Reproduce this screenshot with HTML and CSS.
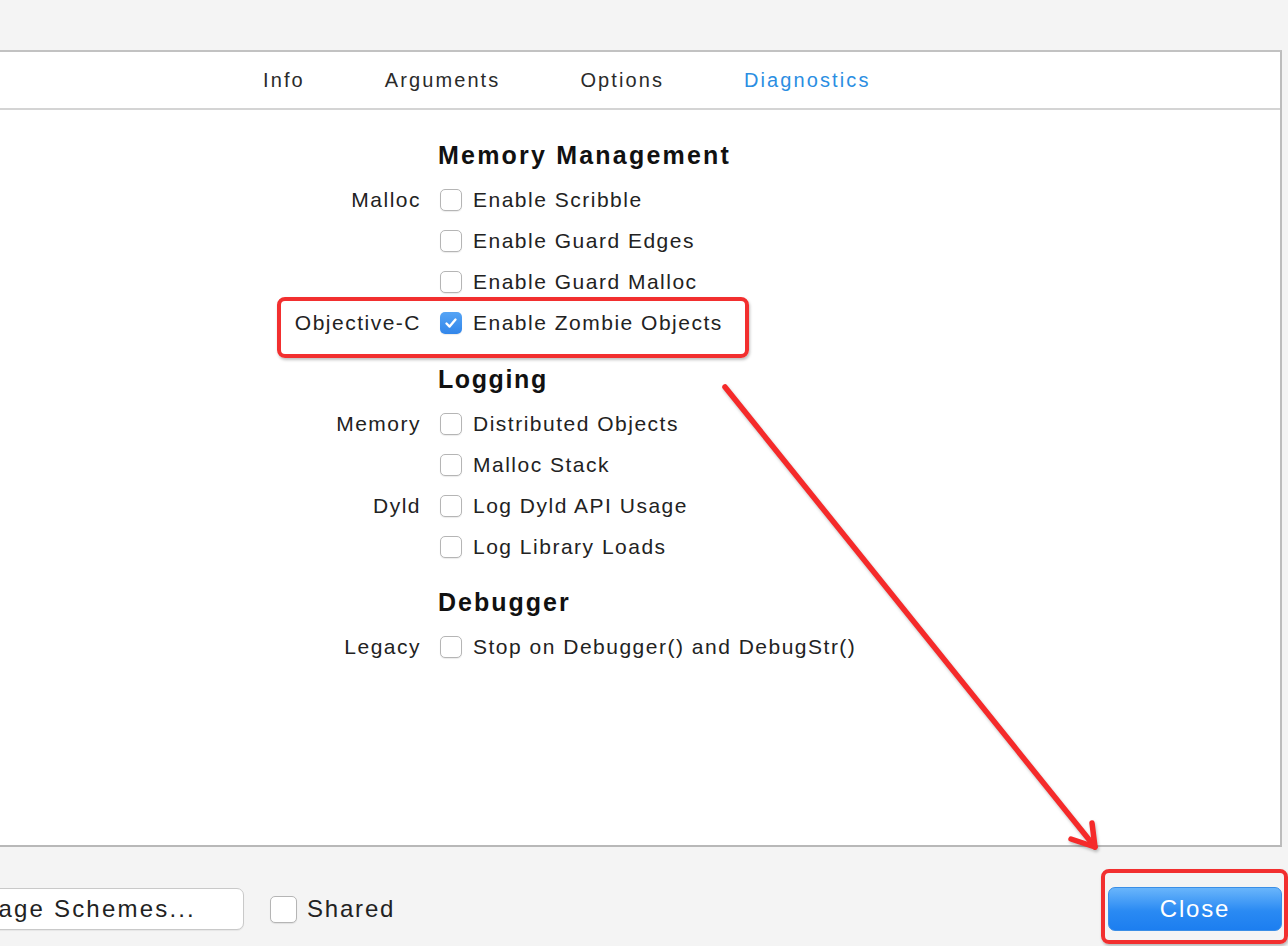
FILE: index.html
```html
<!DOCTYPE html>
<html>
<head>
<meta charset="utf-8">
<link rel="stylesheet" href="styles.css">
</head>
<body>
<div class="window">
  <div class="panel">
    <div class="tabs">
      <span class="tab">Info</span>
      <span class="tab">Arguments</span>
      <span class="tab">Options</span>
      <span class="tab active">Diagnostics</span>
    </div>
    <div class="form">
      <div class="row heading h-first"><span class="label"></span><span class="title">Memory Management</span></div>
      <div class="row"><span class="label">Malloc</span><span class="box"></span><span class="text">Enable Scribble</span></div>
      <div class="row"><span class="label"></span><span class="box"></span><span class="text">Enable Guard Edges</span></div>
      <div class="row"><span class="label"></span><span class="box"></span><span class="text">Enable Guard Malloc</span></div>
      <div class="row"><span class="label">Objective-C</span><span class="box checked"><svg viewBox="0 0 22 22" width="22" height="22"><path d="M6.5 11.5 L9.6 14.6 L15.5 7.6" fill="none" stroke="#fff" stroke-width="2.4" stroke-linecap="round" stroke-linejoin="round"/></svg></span><span class="text">Enable Zombie Objects</span></div>
      <div class="row heading h-logging"><span class="label"></span><span class="title">Logging</span></div>
      <div class="row"><span class="label">Memory</span><span class="box"></span><span class="text">Distributed Objects</span></div>
      <div class="row"><span class="label"></span><span class="box"></span><span class="text">Malloc Stack</span></div>
      <div class="row"><span class="label">Dyld</span><span class="box"></span><span class="text">Log Dyld API Usage</span></div>
      <div class="row"><span class="label"></span><span class="box"></span><span class="text">Log Library Loads</span></div>
      <div class="row heading h-debugger"><span class="label"></span><span class="title">Debugger</span></div>
      <div class="row"><span class="label">Legacy</span><span class="box"></span><span class="text">Stop on Debugger() and DebugStr()</span></div>
    </div>
  </div>
  <div class="footer">
    <div class="btn manage">Manage Schemes...</div>
    <div class="shared"><span class="box big"></span><span>Shared</span></div>
    <div class="btn close">Close</div>
  </div>
</div>

<div class="hl hl-zombie"></div>
<div class="hl hl-close"></div>
<svg class="arrow" width="1288" height="946" viewBox="0 0 1288 946">
  <g fill="none" stroke="#f52a2a" stroke-width="5.5" stroke-linecap="round" stroke-linejoin="round">
    <path d="M725 387 L1095 847"/>
    <path d="M1071 839 L1095 847 L1092 823"/>
  </g>
</svg>
</body>
</html>
```

FILE: styles.css
```css
html, body {
  margin: 0;
  padding: 0;
}
body {
  width: 1288px;
  height: 946px;
  overflow: hidden;
  background: #f4f4f4;
  font-family: "Liberation Sans", Arial, sans-serif;
  color: #222;
  position: relative;
}
.window {
  padding-top: 50px;
  height: 896px;
  display: flex;
  flex-direction: column;
}
.panel {
  background: #fff;
  border-top: 2px solid #c2c2c2;
  border-right: 2px solid #bdbdbd;
  border-bottom: 2px solid #b8b8b8;
  margin-right: 6px;
  height: 793px;
  box-sizing: content-box;
}
.tabs {
  height: 56px;
  border-bottom: 2px solid #d4d4d4;
  display: flex;
  align-items: center;
  padding-left: 263px;
  gap: 80px;
  font-size: 20px;
  letter-spacing: 2.1px;
  color: #2a2a2a;
}
.tab.active {
  color: #2b8ee2;
}
.form {
  padding-top: 25px;
  display: flex;
  flex-direction: column;
}
.row {
  display: flex;
  align-items: center;
  height: 41px;
  font-size: 21px;
  letter-spacing: 1.5px;
}
.label {
  width: 421px;
  text-align: right;
  flex: none;
  margin-right: 19px;
}
.box {
  flex: none;
  width: 20px;
  height: 20px;
  border: 1px solid #b5b5b5;
  border-radius: 5px;
  background: #fff;
  box-shadow: 0 1px 1px rgba(0,0,0,0.08);
  margin-right: 11px;
  display: flex;
  align-items: center;
  justify-content: center;
}
.box.checked {
  width: 22px;
  height: 22px;
  border: none;
  background: linear-gradient(#55a4f5, #3286ea);
}
.box.checked svg {
  display: block;
}
.heading {
  font-weight: bold;
  font-size: 25px;
  letter-spacing: 2.2px;
  color: #111;
}
.heading .label {
  margin-right: 17px;
}
.h-first {
  height: 44px;
  padding-bottom: 3px;
  box-sizing: border-box;
  align-items: flex-start;
  line-height: 40px;
}
.h-logging {
  height: 60px;
  padding-top: 16px;
  box-sizing: border-box;
  align-items: flex-start;
  line-height: 41px;
  letter-spacing: 1.6px;
}
.h-debugger {
  height: 59px;
  padding-top: 15px;
  box-sizing: border-box;
  align-items: flex-start;
  line-height: 41px;
  letter-spacing: 2px;
}
.footer {
  flex: 1;
  display: flex;
  align-items: center;
  padding-top: 25px;
  font-size: 24px;
  letter-spacing: 1.8px;
  color: #222;
}
.btn {
  display: flex;
  align-items: center;
  justify-content: center;
  box-sizing: border-box;
}
.manage {
  margin-left: -92px;
  width: 336px;
  height: 42px;
  background: #fff;
  border: 1px solid #c9c9c9;
  border-radius: 7px;
  box-shadow: 0 1px 1px rgba(0,0,0,0.06);
  justify-content: flex-end;
  padding-right: 47px;
  letter-spacing: 2.2px;
  white-space: nowrap;
}
.shared {
  margin-left: 26px;
  display: flex;
  align-items: center;
}
.box.big {
  width: 25px;
  height: 25px;
  border-radius: 5px;
  margin-right: 10px;
}
.close {
  margin-left: auto;
  margin-right: 6px;
  width: 174px;
  height: 44px;
  border-radius: 7px;
  background: linear-gradient(#69b5fb, #2a8af3 55%, #1c7ef0);
  color: #fff;
  border: 1px solid #3a8ee6;
}
.hl {
  position: absolute;
  border: 4px solid #f22f2f;
  border-radius: 8px;
  box-shadow: 1px 2px 3px rgba(0,0,0,0.25);
  box-sizing: border-box;
}
.hl-zombie {
  left: 277px;
  top: 297px;
  width: 472px;
  height: 61px;
}
.hl-close {
  left: 1101px;
  top: 869px;
  width: 187px;
  height: 75px;
}
.arrow {
  position: absolute;
  left: 0;
  top: 0;
  filter: drop-shadow(1px 2px 1.5px rgba(0,0,0,0.25));
}
```
